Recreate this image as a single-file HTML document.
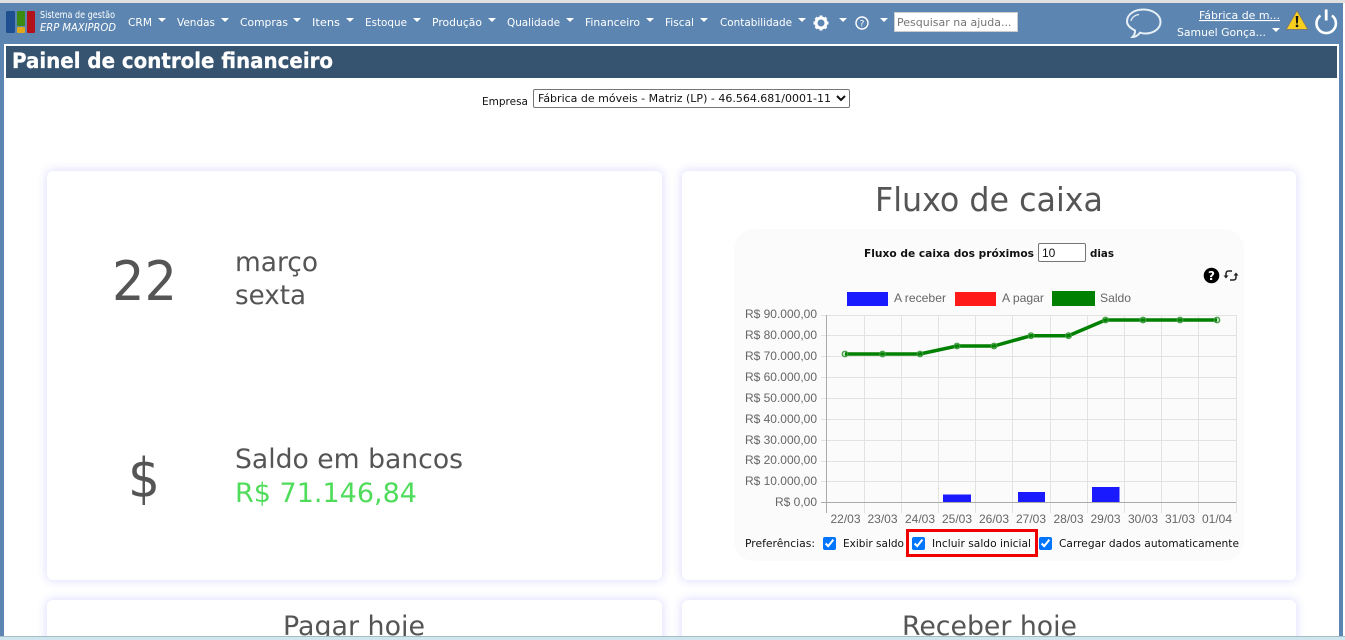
<!DOCTYPE html>
<html lang="pt-BR"><head><meta charset="utf-8"><title>Painel de controle financeiro</title>
<style>
html,body{margin:0;padding:0;width:1345px;height:640px;overflow:hidden;background:#fff}
#root{position:absolute;left:0;top:0;width:1345px;height:640px;overflow:hidden;background:#fff}
svg{position:absolute;left:0;top:0}
text{font-family:"DejaVu Sans",sans-serif}
.n{font-size:11px;fill:#fff}
.c{fill:#fff}
.l{font-family:"Liberation Sans",sans-serif;font-size:12px;fill:#666}
.y{font-family:"Liberation Sans",sans-serif;font-size:12px;fill:#666;text-anchor:end}
.p{font-size:11px;fill:#111}
.g{fill:#555}
.card{position:absolute;background:#fff;border-radius:6px;box-shadow:0 0 10px 1px #dedeff}
input,select{position:absolute;box-sizing:border-box;margin:0}
input[type=checkbox]{width:13px;height:13px;accent-color:#0075ff}
</style></head><body>
<div id="root">
<div style="position:absolute;left:0;top:0;width:1343px;height:640px;background:#5c86b1"></div>
<div style="position:absolute;left:0;top:0;width:1345px;height:3px;background:#e0e0e0"></div>
<div style="position:absolute;left:4px;top:44px;width:1335px;height:592px;background:#fff"></div>
<div style="position:absolute;left:6px;top:46px;width:1331px;height:32px;background:#36536f"></div>
<div class="card" style="left:47px;top:171px;width:615px;height:409px"></div>
<div class="card" style="left:682px;top:171px;width:614px;height:409px"></div>
<div class="card" style="left:47px;top:600px;width:615px;height:60px"></div>
<div class="card" style="left:682px;top:600px;width:614px;height:60px"></div>
<div style="position:absolute;left:734px;top:229px;width:510px;height:332px;background:#fbfbfb;border-radius:20px"></div>
<svg width="1345" height="640" viewBox="0 0 1345 640">
<rect x="6" y="11" width="9" height="22" rx="1.5" fill="#1d4f91"/>
<rect x="17" y="11" width="8" height="15" rx="1" fill="#3d8a12"/>
<rect x="17" y="27" width="8" height="6" rx="1" fill="#e0a81c"/>
<rect x="27" y="11" width="8" height="22" rx="1" fill="#b3121a"/>
<text x="40" y="18" font-size="10" fill="#fff" textLength="75" lengthAdjust="spacingAndGlyphs">Sistema de gestão</text>
<text x="40" y="31" font-size="11" font-style="italic" fill="#fff" textLength="76" lengthAdjust="spacingAndGlyphs">ERP MAXIPROD</text>
<g class="n">
<text class="n" x="128" y="26" textLength="24" lengthAdjust="spacingAndGlyphs">CRM</text>
<text class="n" x="177" y="26" textLength="38" lengthAdjust="spacingAndGlyphs">Vendas</text>
<text class="n" x="240" y="26" textLength="48" lengthAdjust="spacingAndGlyphs">Compras</text>
<text class="n" x="312" y="26" textLength="28" lengthAdjust="spacingAndGlyphs">Itens</text>
<text class="n" x="365" y="26" textLength="42" lengthAdjust="spacingAndGlyphs">Estoque</text>
<text class="n" x="432" y="26" textLength="50" lengthAdjust="spacingAndGlyphs">Produção</text>
<text class="n" x="507" y="26" textLength="53" lengthAdjust="spacingAndGlyphs">Qualidade</text>
<text class="n" x="585" y="26" textLength="55" lengthAdjust="spacingAndGlyphs">Financeiro</text>
<text class="n" x="665" y="26" textLength="29" lengthAdjust="spacingAndGlyphs">Fiscal</text>
<text class="n" x="720" y="26" textLength="72" lengthAdjust="spacingAndGlyphs">Contabilidade</text>
</g>
<g class="c">
<path d="M158 18h8l-4 4zM221 18h8l-4 4zM293 18h8l-4 4zM346 18h8l-4 4zM413 18h8l-4 4zM488 18h8l-4 4zM566 18h8l-4 4zM646 18h8l-4 4zM700 18h8l-4 4zM798 18h8l-4 4zM839 18h8l-4 4zM880 18h8l-4 4zM1272 28h8l-4 4z"/>
</g>
<circle cx="821" cy="23" r="5" fill="none" stroke="#fff" stroke-width="3"/>
<g stroke="#fff" stroke-width="3"><path d="M821 15.500v3M821 27.500v3M813.500 23h3M825.500 23h3M815.700 17.700l2.100 2.100M824.200 26.200l2.100 2.100M815.700 28.300l2.100-2.100M824.200 19.800l2.100-2.100"/></g>
<circle cx="862" cy="23" r="6" fill="none" stroke="#fff" stroke-width="1.400"/>
<text x="862" y="26.500" font-size="9" fill="#fff" text-anchor="middle">?</text>
<path d="M1143.500 9.500c9.500 0 17 5.500 17 12.500s-7.500 11.500-15 11.500c-2 0-4-.3-5.500-.8-1.800 2.200-4.500 4.300-7.500 4.300 1.700-1.700 2.700-4 2.500-6.500-4-2-8-5-8-9 0-7 7-12 16.500-12z" fill="none" stroke="#e6eef6" stroke-width="2"/>
<path d="M1131 21c.5-3.500 4-6 8-6.500" fill="none" stroke="#e6eef6" stroke-width="1.300"/>
<text x="1199" y="19" font-size="11" fill="#fff" text-decoration="underline" textLength="81" lengthAdjust="spacingAndGlyphs">Fábrica de m...</text>
<text x="1177" y="36" font-size="11" fill="#fff" textLength="89" lengthAdjust="spacingAndGlyphs">Samuel Gonça...</text>
<path d="M1297 10.500l11 19h-22z" fill="#f8cf1e" stroke="#777" stroke-width="1" stroke-linejoin="round"/>
<path d="M1295.700 16h2.600l-.5 7.500h-1.600z" fill="#111"/><rect x="1295.800" y="24.700" width="2.400" height="2.400" fill="#111"/>
<path d="M1320.500 15.500a9.700 9.700 0 1 0 11.400 0" fill="none" stroke="#fff" stroke-width="2.600"/>
<path d="M1326.200 9.500v11" stroke="#fff" stroke-width="2.800"/>
<text x="12" y="68" font-size="21" font-weight="bold" fill="#fff" stroke="#fff" stroke-width=".3" textLength="321" lengthAdjust="spacingAndGlyphs">Painel de controle financeiro</text>
<text x="482" y="105" font-size="11" fill="#111" textLength="46" lengthAdjust="spacingAndGlyphs">Empresa</text>
<text class="g" x="112" y="300" font-size="54" textLength="65" lengthAdjust="spacingAndGlyphs">22</text>
<text class="g" x="235" y="271" font-size="27" textLength="83" lengthAdjust="spacingAndGlyphs">março</text>
<text class="g" x="235" y="304" font-size="27" textLength="71" lengthAdjust="spacingAndGlyphs">sexta</text>
<text class="g" x="128" y="497" font-size="54" textLength="32" lengthAdjust="spacingAndGlyphs">$</text>
<text class="g" x="235" y="468" font-size="27" textLength="228" lengthAdjust="spacingAndGlyphs">Saldo em bancos</text>
<text x="235" y="502" font-size="27" fill="#4fdc5a" textLength="182" lengthAdjust="spacingAndGlyphs">R$ 71.146,84</text>
<text class="g" x="875" y="211" font-size="33" textLength="228" lengthAdjust="spacingAndGlyphs">Fluxo de caixa</text>
<text class="g" x="283" y="635" font-size="27" textLength="142" lengthAdjust="spacingAndGlyphs">Pagar hoje</text>
<text class="g" x="902" y="635" font-size="27" textLength="175" lengthAdjust="spacingAndGlyphs">Receber hoje</text>
<text x="864" y="257" font-size="11" font-weight="bold" fill="#111" textLength="170" lengthAdjust="spacingAndGlyphs">Fluxo de caixa dos próximos</text>
<text x="1090" y="257" font-size="11" font-weight="bold" fill="#111" textLength="24" lengthAdjust="spacingAndGlyphs">dias</text>
<circle cx="1211.500" cy="275.500" r="7.800" fill="#000"/>
<text x="1211.500" y="280" font-size="12" font-weight="bold" fill="#fff" text-anchor="middle">?</text>
<path d="M1226 277v-3.500c0-1.500 1-2.500 2.500-2.500h3.500M1236 274v3.500c0 1.500-1 2.500-2.500 2.500h-3.500" fill="none" stroke="#222" stroke-width="1.500"/>
<path d="M1223.500 275.500h5l-2.500 3zM1233.500 275.500h5l-2.500-3z" fill="#222"/>
<rect x="847" y="292" width="41" height="14" fill="#1a1aff"/>
<rect x="955" y="292" width="41" height="14" fill="#ff1a1a"/>
<rect x="1052" y="291" width="43" height="15" fill="#008000"/>
<text class="l" x="894" y="302" textLength="52" lengthAdjust="spacingAndGlyphs">A receber</text>
<text class="l" x="1002" y="302" textLength="42" lengthAdjust="spacingAndGlyphs">A pagar</text>
<text class="l" x="1100" y="302" textLength="31" lengthAdjust="spacingAndGlyphs">Saldo</text>
<g stroke="#e2e2e2" stroke-width="1" fill="none">
<path d="M821 315.500H1236M821 335.500H1236M821 356.500H1236M821 377.500H1236M821 398.500H1236M821 419.500H1236M821 440.500H1236M821 461.500H1236M821 481.500H1236"/>
<path d="M864.500 315V513M901.500 315V513M938.500 315V513M975.500 315V513M1012.500 315V513M1050.500 315V513M1087.500 315V513M1124.500 315V513M1161.500 315V513M1198.500 315V513M1236.500 315V513"/>
</g>
<path d="M826.500 315V513M821 502.500H1236" stroke="#aaa" stroke-width="1" fill="none"/>
<g fill="#1a1aff"><rect x="943" y="494.500" width="28" height="7.500"/><rect x="1018" y="492" width="27" height="10"/><rect x="1092" y="487" width="27.500" height="15"/></g>
<g class="y">
<text class="y" x="817" y="318">R$ 90.000,00</text><text class="y" x="817" y="339">R$ 80.000,00</text><text class="y" x="817" y="360">R$ 70.000,00</text><text class="y" x="817" y="381">R$ 60.000,00</text><text class="y" x="817" y="402">R$ 50.000,00</text><text class="y" x="817" y="423">R$ 40.000,00</text><text class="y" x="817" y="444">R$ 30.000,00</text><text class="y" x="817" y="464">R$ 20.000,00</text><text class="y" x="817" y="485">R$ 10.000,00</text><text class="y" x="817" y="506">R$ 0,00</text>
</g>
<g class="l" text-anchor="middle">
<text class="l" x="845.500" y="523">22/03</text><text class="l" x="882.500" y="523">23/03</text><text class="l" x="920" y="523">24/03</text><text class="l" x="957" y="523">25/03</text><text class="l" x="994" y="523">26/03</text><text class="l" x="1031" y="523">27/03</text><text class="l" x="1068.500" y="523">28/03</text><text class="l" x="1105.500" y="523">29/03</text><text class="l" x="1143" y="523">30/03</text><text class="l" x="1180" y="523">31/03</text><text class="l" x="1217" y="523">01/04</text>
</g>
<polyline points="845,354 882.500,354 920,354 957,346 994,346 1031,335.700 1068.500,335.700 1105.500,320 1143,320 1180,320 1217,320" fill="none" stroke="#008000" stroke-width="3.500"/>
<g fill="#008000" fill-opacity=".2" stroke="#3c9a3c" stroke-width="1.200">
<circle cx="845" cy="354" r="2.800"/><circle cx="882.500" cy="354" r="2.800"/><circle cx="920" cy="354" r="2.800"/><circle cx="957" cy="346" r="2.800"/><circle cx="994" cy="346" r="2.800"/><circle cx="1031" cy="335.700" r="2.800"/><circle cx="1068.500" cy="335.700" r="2.800"/><circle cx="1105.500" cy="320" r="2.800"/><circle cx="1143" cy="320" r="2.800"/><circle cx="1180" cy="320" r="2.800"/><circle cx="1217" cy="320" r="2.800"/>
</g>
<text class="p" x="745" y="547" textLength="70" lengthAdjust="spacingAndGlyphs">Preferências:</text>
<text class="p" x="843" y="547" textLength="61" lengthAdjust="spacingAndGlyphs">Exibir saldo</text>
<text class="p" x="932" y="547" textLength="99" lengthAdjust="spacingAndGlyphs">Incluir saldo inicial</text>
<text class="p" x="1059" y="547" textLength="180" lengthAdjust="spacingAndGlyphs">Carregar dados automaticamente</text>
<rect x="907.500" y="530.500" width="129" height="25" fill="none" stroke="#f00000" stroke-width="3"/>
</svg>
<div style="position:absolute;left:0;top:636px;width:1345px;height:4px;background:#cfe6ee;border-top:1px solid #a8bcc4;box-sizing:border-box"></div>
<input type="text" placeholder="Pesquisar na ajuda..." style="left:894px;top:12px;width:124px;height:20px;border:1px solid #ccc;background:#fff;padding:0 2px;font:11px 'DejaVu Sans',sans-serif;outline:0">
<select style="left:533px;top:89px;width:317px;height:19px;font:11px 'DejaVu Sans',sans-serif;background:#fff;border:1px solid #767676;border-radius:2px;color:#111;padding:0"><option>Fábrica de móveis - Matriz (LP) - 46.564.681/0001-11</option></select>
<input type="text" value="10" style="left:1038px;top:243px;width:48px;height:19px;border:1px solid #767676;border-radius:2px;background:#fff;padding:0 3px;font:12px 'Liberation Sans',sans-serif;color:#111">
<input type="checkbox" checked style="left:823px;top:537px">
<input type="checkbox" checked style="left:912px;top:537px">
<input type="checkbox" checked style="left:1039px;top:537px">
</div>
</body></html>
